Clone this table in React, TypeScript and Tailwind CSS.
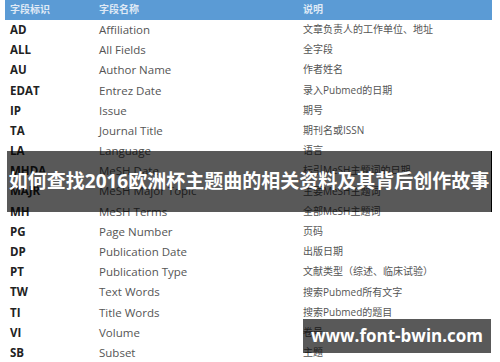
import React from 'react';

const rows: [string, string, string][] = [
	['AD', 'Affiliation', '文章负责人的工作单位、地址'],
	['ALL', 'All Fields', '全字段'],
	['AU', 'Author Name', '作者姓名'],
	['EDAT', 'Entrez Date', '录入Pubmed的日期'],
	['IP', 'Issue', '期号'],
	['TA', 'Journal Title', '期刊名或ISSN'],
	['LA', 'Language', '语言'],
	['MHDA', 'MeSH Date', '标引MeSH主题词的日期'],
	['MAJR', 'MeSH Major Topic', '主要MeSH主题词'],
	['MH', 'MeSH Terms', '全部MeSH主题词'],
	['PG', 'Page Number', '页码'],
	['DP', 'Publication Date', '出版日期'],
	['PT', 'Publication Type', '文献类型（综述、临床试验）'],
	['TW', 'Text Words', '搜索Pubmed所有文字'],
	['TI', 'Title Words', '搜索Pubmed的题目'],
	['VI', 'Volume', '卷号'],
	['SB', 'Subset', '主题'],
];

export default function App() {
	return (
		<div className="relative w-[500px] h-[362px] overflow-hidden bg-white font-['Open_Sans','Noto_Sans_CJK_SC',sans-serif]">
			<div className="mx-[5px] w-[487px]">
				{/* header */}
				<div className="flex items-center h-[19.5px] bg-[#5b9bd5] text-[10px] font-semibold text-[#dfe9f5]">
					<div className="w-[94px] pl-[5px]">字段标识</div>
					<div className="w-[204px]">字段名称</div>
					<div>说明</div>
				</div>

				{rows.map(([code, name, desc], i) => (
					<div key={i} className="flex items-center h-[20.2px]">
						<div className="w-[94px] pl-[5px] text-[11.5px] font-bold text-[#222]">{code}</div>
						<div className="w-[204px] text-[11.5px] text-[#555]">{name}</div>
						<div className="text-[10px] text-[#555]">{desc}</div>
					</div>
				))}
				<div className="border-t border-[#999]" />
			</div>

			{/* title banner */}
			<div className="absolute left-[7px] top-[151px] w-[485px] h-[61px] bg-black/65 border-r border-black flex items-center justify-center">
				<span className="whitespace-nowrap text-[19px] font-bold text-white">如何查找2016欧洲杯主题曲的相关资料及其背后创作故事</span>
			</div>

			{/* watermark */}
			<div className="absolute left-[303px] top-[319px] w-[188px] h-[34px] bg-black/65 flex items-center justify-center">
				<span className="whitespace-nowrap text-[17px] font-bold text-white">www.font-bwin.com</span>
			</div>
		</div>
	);
}
